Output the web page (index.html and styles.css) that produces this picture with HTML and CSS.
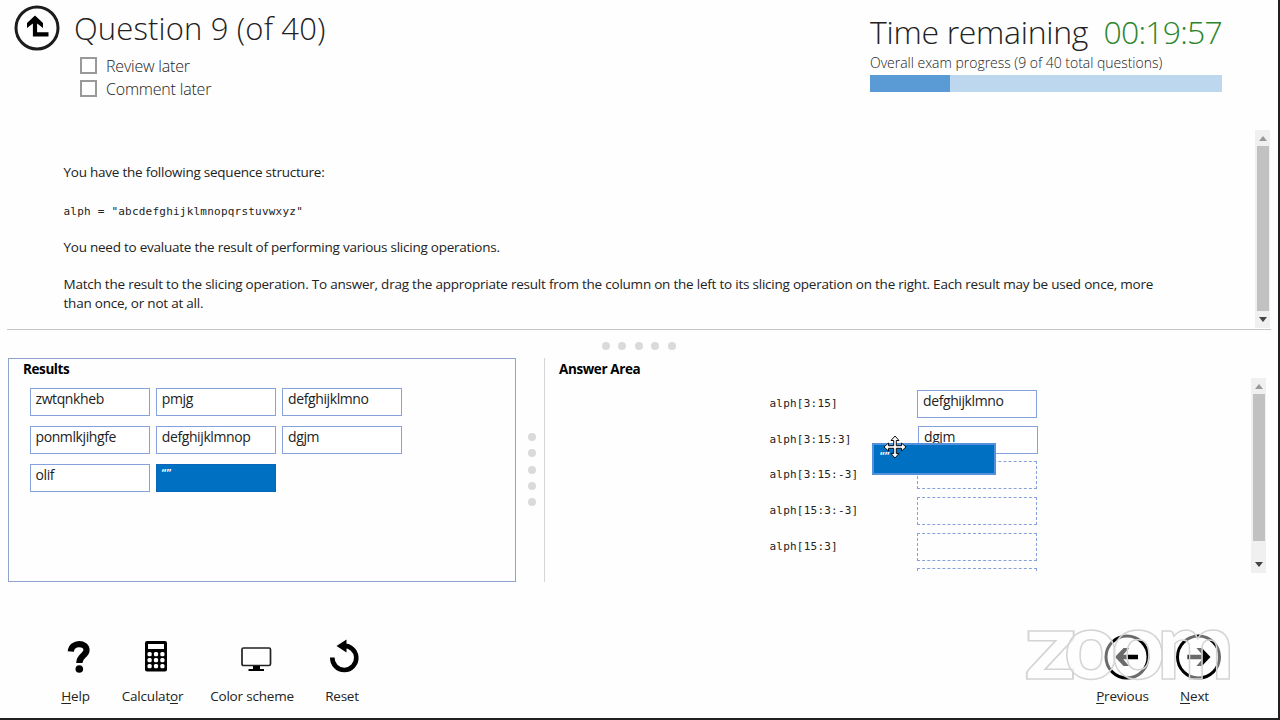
FILE: index.html
```html
<!DOCTYPE html>
<html lang="en">
<head>
<meta charset="utf-8">
<title>Question 9 (of 40)</title>
<link rel="stylesheet" href="styles.css">
</head>
<body>
<div class="app">
  <header class="header">
    <svg class="back" viewBox="0 0 46 46" width="46" height="46"><circle cx="23" cy="23" r="21" fill="none" stroke="#1c1c1c" stroke-width="3"/><path d="M21 14V29.300H34.500" fill="none" stroke="#000" stroke-width="4.200"/><path d="M21 10.500L29 18V23L23.500 18.800H18.500L13 23V18Z" fill="#000"/></svg>
    <div class="heading">
      <h1 class="title">Question 9 (of 40)</h1>
      <label class="check"><i class="box"></i><span>Review later</span></label>
      <label class="check"><i class="box"></i><span>Comment later</span></label>
    </div>
    <div class="status">
      <div class="time"><span class="time-label">Time remaining</span><span class="clock">00:19:57</span></div>
      <div class="overall">Overall exam progress (9 of 40 total questions)</div>
      <div class="bar"><div class="bar-fill" style="width:22.6%"></div></div>
    </div>
  </header>

  <section class="question">
    <div class="prompt">
      <p class="p1">You have the following sequence structure:</p>
      <p class="code">alph = "abcdefghijklmnopqrstuvwxyz"</p>
      <p class="p2">You need to evaluate the result of performing various slicing operations.</p>
      <p class="p3">Match the result to the slicing operation. To answer, drag the appropriate result from the column on the left to its slicing operation on the right. Each result may be used once, more<br>than once, or not at all.</p>
    </div>
    <div class="scroll scroll-q"><i class="up"></i><i class="thumb"></i><i class="down"></i></div>
  </section>

  <div class="dots dots-h"><i></i><i></i><i></i><i></i><i></i></div>

  <main class="work">
    <section class="results">
      <h2 class="results-title">Results</h2>
      <div class="tiles">
        <div class="tile">zwtqnkheb</div><div class="tile">pmjg</div><div class="tile">defghijklmno</div>
        <div class="tile">ponmlkjihgfe</div><div class="tile">defghijklmnop</div><div class="tile">dgjm</div>
        <div class="tile">olif</div><div class="tile tile-active">“”</div>
      </div>
    </section>
    <div class="dots dots-v"><i></i><i></i><i></i><i></i><i></i></div>
    <section class="answers">
      <h2 class="answers-title">Answer Area</h2>
      <div class="answer-body">
        <div class="rows">
          <div class="row"><code>alph[3:15]</code><div class="tile">defghijklmno</div></div>
          <div class="row"><code>alph[3:15:3]</code><div class="tile tile-second">dgjm</div></div>
          <div class="row"><code>alph[3:15:-3]</code><div class="slot"></div></div>
          <div class="row"><code>alph[15:3:-3]</code><div class="slot"></div></div>
          <div class="row"><code>alph[15:3]</code><div class="slot"></div></div>
          <div class="row"><code></code><div class="slot"></div></div>
        </div>
        <div class="scroll scroll-a"><i class="up"></i><i class="thumb"></i><i class="down"></i></div>
      </div>
    </section>
  </main>

  <footer class="footer">
    <div class="tool tool-help">
      <svg viewBox="0 0 24 34" width="24" height="34"><path d="M3.800 11.500C4.500 1.500 20 2 19.500 10.500C19.200 15.500 12.300 15.500 12.300 23" fill="none" stroke="#000" stroke-width="6.200"/><circle cx="12.300" cy="29" r="3.800"/></svg>
      <span><u>H</u>elp</span>
    </div>
    <div class="tool tool-calc">
      <svg viewBox="0 0 24 34" width="24" height="34"><rect x="1" y="1" width="22" height="30.500" rx="2"/><g fill="#fff"><rect x="4" y="4" width="16" height="5"/><rect x="3.500" y="12" width="4.200" height="4.200" rx="1.500"/><rect x="9.900" y="12" width="4.200" height="4.200" rx="1.500"/><rect x="16.300" y="12" width="4.200" height="4.200" rx="1.500"/><rect x="3.500" y="18" width="4.200" height="4.200" rx="1.500"/><rect x="9.900" y="18" width="4.200" height="4.200" rx="1.500"/><rect x="16.300" y="18" width="4.200" height="4.200" rx="1.500"/><rect x="3.500" y="24" width="4.200" height="4.200" rx="1.500"/><rect x="9.900" y="24" width="4.200" height="4.200" rx="1.500"/><rect x="16.300" y="24" width="4.200" height="4.200" rx="1.500"/></g></svg>
      <span>Calculat<u>o</u>r</span>
    </div>
    <div class="tool tool-color">
      <svg viewBox="0 0 32 34" width="32" height="34"><rect x="2" y="8" width="28.500" height="17.500" rx="1.500" fill="none" stroke="#222" stroke-width="1.700"/><path d="M13 26H20V29H24V31H8.500V29H13Z"/></svg>
      <span>Color scheme</span>
    </div>
    <div class="tool tool-reset">
      <svg viewBox="0 0 32 34" width="32" height="34"><path d="M4.300 17.500A12 12 0 1 0 15 6" fill="none" stroke="#000" stroke-width="4.600"/><path d="M8.500 6L18.500 -.5V12.500Z"/></svg>
      <span>Reset</span>
    </div>
    <div class="nav nav-prev">
      <svg viewBox="0 0 46 46" width="46" height="46"><circle cx="23" cy="23" r="21" fill="none" stroke="#000" stroke-width="3"/><path d="M11 23L19.500 14H25L19.300 20.700H34V25.300H19.300L25 32H19.500Z"/></svg>
      <span><u>P</u>revious</span>
    </div>
    <div class="nav nav-next">
      <svg viewBox="0 0 46 46" width="46" height="46"><circle cx="23" cy="23" r="21" fill="none" stroke="#000" stroke-width="3"/><path d="M35 23L26.500 14H21L26.700 20.700H12V25.300H26.700L21 32H26.500Z"/></svg>
      <span><u>N</u>ext</span>
    </div>
  </footer>

  <div class="drag-tile">“”</div>
  <svg class="cursor" viewBox="0 0 24 24" width="24" height="24"><path d="M12 1L16 5.500H13.300V10.700H18.500V8L23 12L18.500 16V13.300H13.300V18.500H16L12 23L8 18.500H10.700V13.300H5.500V16L1 12L5.500 8V10.700H10.700V5.500H8Z" fill="#fff" stroke="#111" stroke-width="1"/></svg>
  <svg class="watermark" viewBox="0 0 220 126" width="220" height="126"><g class="brand"><text x="1" y="99" textLength="53" lengthAdjust="spacingAndGlyphs">z</text><text x="41" y="99" textLength="54" lengthAdjust="spacingAndGlyphs">o</text><text x="88" y="99" textLength="54" lengthAdjust="spacingAndGlyphs">o</text><text x="134" y="99" textLength="77" lengthAdjust="spacingAndGlyphs">m</text></g></svg>
</div>
</body>
</html>
```
FILE: styles.css
```css
* { box-sizing: border-box; }
body {
  margin: 0;
  width: 1280px;
  height: 720px;
  overflow: hidden;
  background: #fefefe;
  color: #222;
  font-family: "Open Sans", "Noto Sans", sans-serif;
}
h1, h2, p { margin: 0; }
svg { display: block; overflow: visible; }
u { text-decoration: underline; text-decoration-thickness: 1px; text-underline-offset: 2px; }
.app {
  position: relative;
  display: flex;
  flex-direction: column;
  width: 1280px;
  height: 720px;
  border-right: 2px solid #211f20;
  border-bottom: 2px solid #211f20;
}

/* Header */
.header { display: flex; flex: none; height: 130px; padding: 5px 56px 0 14px; }
.heading { margin-left: 14px; }
.title {
  height: 49px;
  line-height: 46px;
  font-size: 31px;
  font-weight: 300;
  letter-spacing: 0.15px;
  white-space: nowrap;
}
.check { display: flex; height: 23px; margin-left: 6px; font-size: 16px; font-weight: 300; line-height: 25px; white-space: nowrap; letter-spacing: -0.2px; }
.box { width: 17px; height: 17px; margin: 3px 9px 0 0; border: 2px solid #999; }
.status { width: 352px; margin-left: auto; white-space: nowrap; }
.time { display: flex; justify-content: space-between; height: 47px; line-height: 53px; font-size: 32px; font-weight: 300; letter-spacing: -0.8px; }
.time-label { letter-spacing: -0.3px; }
.clock { color: #2b862b; }
.overall { height: 23px; line-height: 22px; font-size: 14px; font-weight: 300; letter-spacing: -0.02px; }
.bar { height: 17px; background: #bdd7ee; }
.bar-fill { height: 17px; background: #5b9bd5; }

/* Question */
.question { display: flex; flex: none; height: 200px; margin: 0 7px; border-bottom: 1px solid #c6c6c6; }
.prompt { flex: 1; padding: 33px 0 0 56.500px; font-size: 13.500px; line-height: 19px; white-space: nowrap; letter-spacing: -0.24px; }
.p3 { letter-spacing: -0.225px; }
.code, code { font-family: "DejaVu Sans Mono", monospace; font-size: 11px; letter-spacing: 0.22px; }
.code { margin: 20px 0 17px; line-height: 19px; }
.p2 { margin-bottom: 18px; }

.scroll { display: flex; flex-direction: column; align-items: center; width: 15px; background: #f0f0f0; }
.scroll .up { margin-top: 6px; border: 4px solid transparent; border-top: 0; border-bottom: 5px solid #999; }
.scroll .down { margin: auto 0 6px; border: 4px solid transparent; border-bottom: 0; border-top: 5px solid #444; }
.thumb { width: 12px; margin-top: 5px; background: #c1c1c1; }
.scroll-q { height: 198px; margin-right: 1px; }
.scroll-q .thumb { height: 165px; }
.scroll-a { height: 195px; }
.scroll-a .thumb { height: 147px; }

.dots { display: flex; flex: none; }
.dots i { width: 8px; height: 8px; border-radius: 50%; background: #dadada; }
.dots-h { height: 28px; padding: 12px 0 0 602px; gap: 8.400px; }
.dots-v { flex-direction: column; padding: 75px 0 0 12px; width: 28px; gap: 8.300px; }

/* Work area */
.work { display: flex; flex: none; height: 224px; padding-left: 8px; }
.results { width: 508px; border: 1px solid #8ea3d0; padding: 0 0 0 14px; }
.results-title, .answers-title { font-size: 13.500px; font-weight: 700; line-height: 20px; color: #000; letter-spacing: -0.4px; }
.answers-title { padding-top: 1px; height: 20px; }
.tiles { display: grid; grid-template-columns: repeat(3, 120px); gap: 10.200px 6.300px; padding: 9px 0 0 6.500px; }
.tile { width: 120px; height: 28px; padding-left: 5px; border: 1px solid #86a2dc; background: #fff; font-size: 14px; line-height: 20px; letter-spacing: -0.4px; }
.tile-active, .drag-tile { border-color: #0a66b8; background: #0070c2; color: #fff; font-size: 10px; font-weight: 700; letter-spacing: 0.5px; }
.tile-active { line-height: 17px; }
.answers { flex: 1; border-left: 1px solid #d6d6d6; padding: 0 12px 0 14px; }
.answer-body { display: flex; justify-content: space-between; height: 195px; }
.rows { height: 194px; overflow: hidden; padding: 12px 0 0 210.500px; }
.row { display: flex; height: 35.700px; }
.row code { width: 147.500px; line-height: 28px; }
.tile-second { margin-left: 1px; }
.slot { width: 120px; height: 28px; border: 1px dashed #86a2dc; }

/* Footer */
.footer { display: flex; flex: 1; padding-top: 50px; font-size: 13.500px; white-space: nowrap; letter-spacing: -0.2px; }
.tool, .nav { display: flex; flex-direction: column; align-items: center; flex: none; }
.tool span, .nav span { line-height: 20px; }
.tool svg { margin: 8px 0 12px; }
.nav svg { margin: 2px 0 6px; }
.tool-help { width: 30px; margin-left: 60.500px; }
.tool-help svg { transform: translateX(3px); }
.tool-calc { width: 64px; margin-left: 30px; }
.tool-calc svg { transform: translateX(3px); }
.tool-color { width: 86px; margin-left: 24.500px; }
.tool-color svg { transform: translateX(4px); }
.tool-reset { width: 34px; margin-left: 30px; }
.tool-reset svg { transform: translateX(2px); }
.nav-prev { width: 54px; margin-left: auto; }
.nav-prev svg { transform: translateX(4px); }
.nav-next { width: 46px; margin: 0 60.500px 0 22px; }
.nav-next svg { transform: translateX(3.500px); }

/* Layers above the page */
.drag-tile { position: absolute; left: 872px; top: 443px; width: 124px; height: 32px; padding-left: 6px; border: 2px solid #5491dc; line-height: 22px; }
.cursor { position: absolute; left: 883px; top: 435px; }
.watermark { position: absolute; left: 1023px; top: 580px; pointer-events: none; }
.brand { font-family: Lato, sans-serif; font-size: 93px; font-weight: 900; fill: rgba(255, 255, 255, 0.42); stroke: #d4d4d4; stroke-width: 1.500px; }
```
